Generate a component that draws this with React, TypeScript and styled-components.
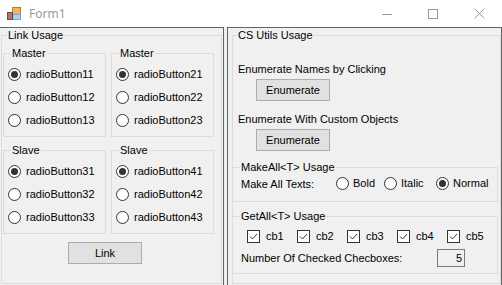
import React from "react";
import styled, { createGlobalStyle, css } from "styled-components";

const GlobalStyle = createGlobalStyle`
  html, body { margin: 0; padding: 0; background: #f0f0f0; }
  body { font-family: "Liberation Sans", Arial, sans-serif; font-size: 11px; color: #000; }
  *, *::before, *::after { box-sizing: border-box; }
`;

const Window = styled.div`
  width: 502px;
  height: 285px;
  display: flex;
  flex-direction: column;
  overflow: hidden;
  background: #f0f0f0;
`;

const TitleBar = styled.div`
  height: 27px;
  flex: none;
  display: flex;
  align-items: center;
  background: #fff;
  padding-left: 7px;
`;

const TitleText = styled.span`
  flex: 1;
  margin-left: 8px;
  font-family: "Segoe UI", "Noto Sans", sans-serif;
  font-size: 12px;
  color: #9a9a9a;
`;

const CaptionButton = styled.div`
  width: 46px;
  height: 27px;
  display: flex;
  align-items: center;
  justify-content: center;
`;

const Body = styled.div`
  flex: 1;
  display: flex;
  min-height: 0;
`;

const Panel = styled.div<{ $side: "left" | "right" }>`
  display: flex;
  flex-direction: column;
  border-top: 1px solid #646464;
  border-right: 1px solid #646464;
  ${(p) =>
    p.$side === "left"
      ? css`
          width: 224px;
          padding: 1px 1px 1px 1px;
        `
      : css`
          flex: 1;
          margin-left: 3px;
          border-left: 1px solid #646464;
          padding: 1px 0 1px 4px;
        `}
`;

const Group = styled.fieldset<{ $fill?: boolean; $gap?: number; $nested?: boolean }>`
  margin: ${(p) => p.$gap ?? 0}px 0 0 0;
  padding: 0;
  min-width: 0;
  border: 1px solid #dcdcdc;
  ${(p) => p.$fill && "flex: 1;"}
  ${(p) => p.$nested && "margin-left: -1px; margin-right: 2px;"}
`;

const Caption = styled.legend<{ $offset: number }>`
  padding: 0 1px;
  margin-left: ${(p) => p.$offset}px;
  height: 13px;
  line-height: 13px;
  font-size: 11px;
`;

const LinkGrid = styled.div`
  display: grid;
  grid-template-columns: 103px 103px;
  column-gap: 5px;
  row-gap: 7px;
  padding: 5px 0 0 1px;
`;

const RadioList = styled.div`
  display: flex;
  flex-direction: column;
  padding: 3px 0 4px 4px;
`;

const OptionRow = styled.label<{ $h?: number; $w?: number; $gap?: number }>`
  display: flex;
  align-items: center;
  height: ${(p) => p.$h ?? 23}px;
  gap: ${(p) => p.$gap ?? 5}px;
  line-height: 13px;
  white-space: nowrap;
  ${(p) => p.$w && `width: ${p.$w}px; flex: none;`}
`;

const RadioMark = styled.span<{ $checked?: boolean }>`
  width: 13px;
  height: 13px;
  flex: none;
  border: 1px solid #333;
  border-radius: 50%;
  background: #fff;
  display: inline-flex;
  align-items: center;
  justify-content: center;
  &::after {
    content: "";
    width: 7px;
    height: 7px;
    border-radius: 50%;
    background: #333;
    display: ${(p) => (p.$checked ? "block" : "none")};
  }
`;

const CheckMark = styled.span`
  width: 13px;
  height: 13px;
  flex: none;
  border: 1px solid #333;
  background: #fff;
  display: inline-flex;
  align-items: center;
  justify-content: center;
`;

const Button = styled.button<{ $left: number; $top: number }>`
  width: 74px;
  height: 22px;
  margin: ${(p) => p.$top}px 0 0 ${(p) => p.$left}px;
  padding: 0;
  border: 1px solid #adadad;
  background: #e1e1e1;
  font: inherit;
  font-size: 11px;
  color: #000;
  flex: none;
`;

const Text = styled.div<{ $top?: number }>`
  line-height: 13px;
  margin-top: ${(p) => p.$top ?? 0}px;
  white-space: nowrap;
`;

const EnumSection = styled.div`
  display: flex;
  flex-direction: column;
  align-items: flex-start;
  padding: 21px 0 0 5px;
`;

const InlineRow = styled.div<{ $h: number; $pl: number; $mt?: number }>`
  display: flex;
  align-items: center;
  height: ${(p) => p.$h}px;
  padding-left: ${(p) => p.$pl}px;
  margin-top: ${(p) => p.$mt ?? 0}px;
`;

const FixedLabel = styled.span<{ $w: number }>`
  width: ${(p) => p.$w}px;
  flex: none;
  white-space: nowrap;
`;

const GroupBody = styled.div<{ $pt: number; $pb: number }>`
  padding: ${(p) => p.$pt}px 0 ${(p) => p.$pb}px 0;
`;

const NumberBox = styled.div`
  width: 28px;
  height: 18px;
  border: 1px solid #7a7a7a;
  background: #f0f0f0;
  text-align: right;
  padding-right: 2px;
  line-height: 16px;
`;

const AppIcon = () => (
  <svg width="14" height="13" viewBox="0 0 14 13">
    <rect x="5.5" y="0.5" width="8" height="7" fill="#f3b55a" stroke="#c27a2a" />
    <rect x="6" y="7.5" width="7.5" height="5" fill="#b7d0ea" stroke="#7fa3c8" />
    <rect x="0.5" y="5.5" width="5" height="7" fill="#e0662a" stroke="#2f5f9f" />
  </svg>
);

const CheckGlyph = () => (
  <svg width="11" height="11" viewBox="0 0 11 11">
    <path d="M2 5.5 L4.5 8 L9 3" fill="none" stroke="#333" strokeWidth="1" />
  </svg>
);

const linkGroups = [
  { title: "Master", items: ["radioButton11", "radioButton12", "radioButton13"] },
  { title: "Master", items: ["radioButton21", "radioButton22", "radioButton23"] },
  { title: "Slave", items: ["radioButton31", "radioButton32", "radioButton33"] },
  { title: "Slave", items: ["radioButton41", "radioButton42", "radioButton43"] },
];

const styleOptions = [
  { label: "Bold", w: 48, checked: false },
  { label: "Italic", w: 52, checked: false },
  { label: "Normal", w: 60, checked: true },
];

const checks = ["cb1", "cb2", "cb3", "cb4", "cb5"];

export default function App() {
  return (
    <>
      <GlobalStyle />
      <Window>
        <TitleBar>
          <AppIcon />
          <TitleText>Form1</TitleText>
          <CaptionButton>
            <svg width="10" height="10" viewBox="0 0 10 10">
              <line x1="0" y1="5.5" x2="10" y2="5.5" stroke="#9a9a9a" />
            </svg>
          </CaptionButton>
          <CaptionButton>
            <svg width="10" height="10" viewBox="0 0 10 10">
              <rect x="0.5" y="0.5" width="9" height="9" fill="none" stroke="#9a9a9a" />
            </svg>
          </CaptionButton>
          <CaptionButton>
            <svg width="11" height="11" viewBox="0 0 11 11">
              <path d="M0.5 0.5 L10.5 10.5 M10.5 0.5 L0.5 10.5" stroke="#9a9a9a" />
            </svg>
          </CaptionButton>
        </TitleBar>
        <Body>
          <Panel $side="left">
            <Group $fill>
              <Caption $offset={5}>Link Usage</Caption>
              <LinkGrid>
                {linkGroups.map((g, gi) => (
                  <Group key={gi}>
                    <Caption $offset={7}>{g.title}</Caption>
                    <RadioList>
                      {g.items.map((it, i) => (
                        <OptionRow key={it}>
                          <RadioMark $checked={i === 0} />
                          {it}
                        </OptionRow>
                      ))}
                    </RadioList>
                  </Group>
                ))}
              </LinkGrid>
              <Button $left={66} $top={8}>Link</Button>
            </Group>
          </Panel>
          <Panel $side="right">
            <Group $fill>
              <Caption $offset={4}>CS Utils Usage</Caption>
              <EnumSection>
                <Text>Enumerate Names by Clicking</Text>
                <Button $left={18} $top={3}>Enumerate</Button>
                <Text $top={12}>Enumerate With Custom Objects</Text>
                <Button $left={18} $top={3}>Enumerate</Button>
              </EnumSection>
              <Group $gap={10} $nested>
                <Caption $offset={7}>MakeAll&lt;T&gt; Usage</Caption>
                <GroupBody $pt={0} $pb={8}>
                  <InlineRow $h={19} $pl={8}>
                    <FixedLabel $w={95}>Make All Texts:</FixedLabel>
                    {styleOptions.map((o) => (
                      <OptionRow key={o.label} $h={19} $w={o.w} $gap={4}>
                        <RadioMark $checked={o.checked} />
                        {o.label}
                      </OptionRow>
                    ))}
                  </InlineRow>
                </GroupBody>
              </Group>
              <Group $gap={8} $nested>
                <Caption $offset={7}>GetAll&lt;T&gt; Usage</Caption>
                <GroupBody $pt={4} $pb={5}>
                  <InlineRow $h={19} $pl={14}>
                    {checks.map((c) => (
                      <OptionRow key={c} $h={19} $w={50} $gap={6}>
                        <CheckMark>
                          <CheckGlyph />
                        </CheckMark>
                        {c}
                      </OptionRow>
                    ))}
                  </InlineRow>
                  <InlineRow $h={20} $pl={8} $mt={2}>
                    <FixedLabel $w={196}>Number Of Checked Checboxes:</FixedLabel>
                    <NumberBox>5</NumberBox>
                  </InlineRow>
                </GroupBody>
              </Group>
            </Group>
          </Panel>
        </Body>
      </Window>
    </>
  );
}
